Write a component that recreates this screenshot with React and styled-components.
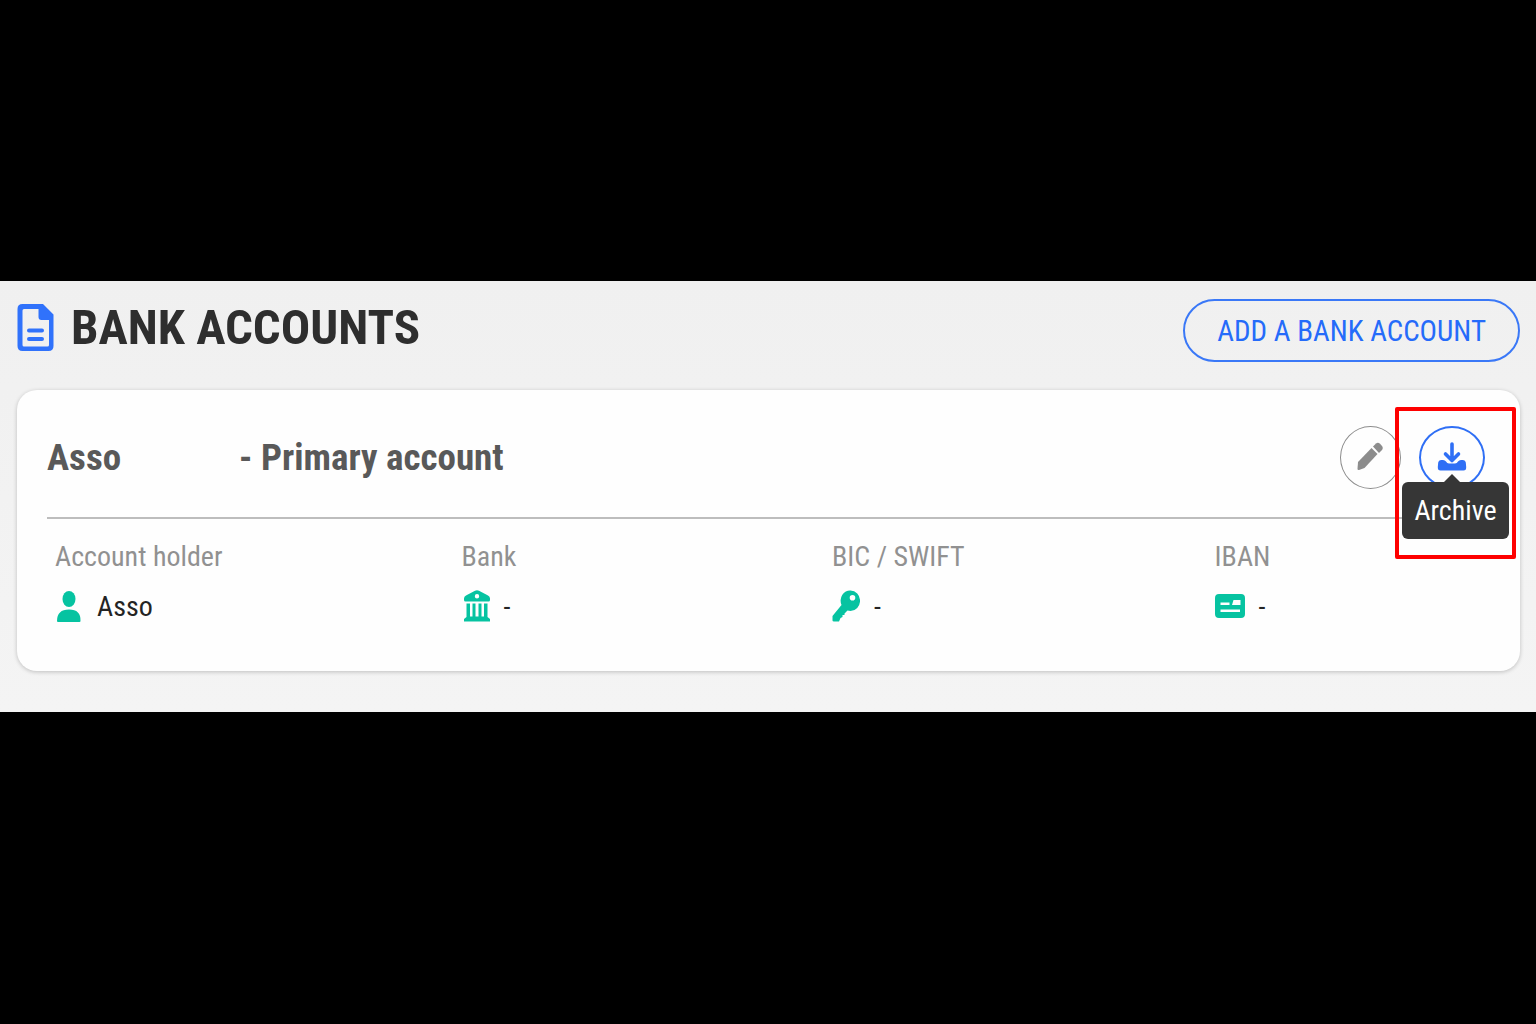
import React from "react";
import styled, { createGlobalStyle } from "styled-components";

const GlobalStyle = createGlobalStyle`
  *, *::before, *::after { box-sizing: border-box; }
  body {
    margin: 0;
    background: #000;
    font-family: "Roboto Condensed", Roboto, "Liberation Sans", sans-serif;
  }
  h1, h2, dl, dt, dd { margin: 0; font-weight: inherit; }
  svg { display: block; flex: none; }
`;

const Stage = styled.div`
  min-height: 100vh;
  display: flex;
  flex-direction: column;
  justify-content: center;
  padding-bottom: 31px;
`;

const Panel = styled.main`
  display: flex;
  flex-direction: column;
  gap: 28px;
  padding: 18px 16px 41px 17px;
  background: linear-gradient(#f0f0f0, #f4f4f4);
`;

const PanelHeader = styled.header`
  display: flex;
  align-items: flex-start;
  justify-content: space-between;
`;

const Title = styled.h1`
  display: flex;
  align-items: center;
  gap: 16px;
  height: 58px;
  color: #2e2e2e;
  font-size: 49px;
  line-height: 58px;
  font-weight: 700;
`;

const AddButton = styled.button`
  height: 63px;
  padding: 0 32px;
  border: 2px solid #3a78f7;
  border-radius: 32px;
  background: transparent;
  color: #256bfa;
  font-family: inherit;
  font-size: 29px;
  line-height: 36px;
  cursor: pointer;
`;

const Card = styled.section`
  padding: 36px 31px 46px 30px;
  border-radius: 20px;
  background: #fefefe;
  box-shadow: 0 1px 4px rgba(0, 0, 0, 0.22);
`;

const CardHeader = styled.div`
  display: flex;
  align-items: center;
  justify-content: space-between;
  padding: 0 4px 28px 0;
  border-bottom: 2px solid #bdbdbd;
`;

const AccountName = styled.h2`
  display: flex;
  gap: 118px;
  color: #595959;
  font-size: 37px;
  line-height: 44px;
  font-weight: 700;
`;

const Actions = styled.div`
  display: flex;
  gap: 18px;
`;

const RoundButton = styled.button`
  display: flex;
  align-items: center;
  justify-content: center;
  width: ${(p) => p.$width}px;
  height: 63px;
  padding: 0 0 2px;
  border: ${(p) => (p.$primary ? 2 : 1)}px solid currentColor;
  border-radius: 50%;
  background: transparent;
  color: ${(p) => (p.$primary ? "#2f6ff5" : "#8c8c8c")};
  cursor: pointer;
`;

const ArchiveAction = styled.div`
  position: relative;
`;

const Highlight = styled.div`
  position: absolute;
  top: -19px;
  left: -24px;
  right: -31px;
  height: 152px;
  border: 4px solid #fe0000;
  border-radius: 2px;
  pointer-events: none;
`;

const Tooltip = styled.div`
  position: absolute;
  top: 56px;
  left: -17px;
  width: 107px;
  border-radius: 6px;
  background: #363636;
  color: #fff;
  font-size: 28px;
  line-height: 57px;
  text-align: center;

  &::before {
    content: "";
    position: absolute;
    left: 42px;
    bottom: 100%;
    border: 8px solid transparent;
    border-top-width: 0;
    border-bottom-color: #363636;
  }
`;

const Details = styled.dl`
  display: grid;
  grid-template-columns: 406fr 370fr 382fr 274fr;
  padding: 20px 0 0 8px;
`;

const Detail = styled.div`
  display: flex;
  flex-direction: column;
  gap: 14px;
`;

const Label = styled.dt`
  color: #919191;
  font-size: 28px;
  line-height: 36px;
`;

const Value = styled.dd`
  display: flex;
  align-items: center;
  gap: 14px;
  height: 36px;
  color: #242424;
  font-size: 28px;
  line-height: 36px;
`;

const DocumentIcon = () => (
  <svg width="38" height="48" viewBox="0 0 38 48" aria-hidden="true">
    <path
      fillRule="evenodd"
      fill="#3072fb"
      d="M6 0H26L36.500 10.500V42Q36.500 47 31.500 47H5.500Q.5 47 .5 42V5Q.5 0 5.500 0ZM7 5Q5.500 5 5.500 6.500V41Q5.500 42.500 7 42.500H30.500Q32 42.500 32 41V16H24.500Q21.500 16 21.500 13V5Z"
    />
    <path d="M12 26.500H25M12 35H25" stroke="#3072fb" strokeWidth="4" strokeLinecap="round" />
  </svg>
);

const PencilIcon = () => (
  <svg width="28" height="30" viewBox="0 0 28 30" fill="currentColor" aria-hidden="true">
    <path d="M1 20L14.500 6L20.500 12L7.500 26L2 28Q.5 28.300 .5 27Z" />
    <path d="M16 4.500L19 1.500Q21 -.2 23 1.800L25 4Q26.500 6 25 8L22 11Z" />
  </svg>
);

const ArchiveIcon = () => (
  <svg width="30" height="30" viewBox="0 0 30 30" aria-hidden="true">
    <path d="M15 2V17M8.500 12L15 18.500L21.500 12" fill="none" stroke="currentColor" strokeWidth="3.600" strokeLinecap="round" strokeLinejoin="round" />
    <path fill="currentColor" d="M4 18H6Q8 18 9 19.500Q10 21.500 12 21.500H18Q20 21.500 21 19.500Q22 18 24 18H26Q28.500 18 28.800 20.500L29.200 25Q29.400 28.500 26.500 28.500H3.500Q.6 28.500 .8 25L1.200 20.500Q1.500 18 4 18Z" />
  </svg>
);

const iconProps = { width: 28, height: 34, viewBox: "0 0 28 34", fill: "#06c3a1", "aria-hidden": true };

const PersonIcon = () => (
  <svg {...iconProps}>
    <ellipse cx="14" cy="9" rx="6.500" ry="8" />
    <path d="M2 31Q2 19.500 14 19.500T25.500 31Q25.500 32 24.500 32H3Q2 32 2 31Z" />
  </svg>
);

const BankIcon = () => (
  <svg {...iconProps}>
    <path
      fillRule="evenodd"
      d="M13 .8Q15 -.4 17 .8L26 5.500Q28 6.500 28 8.500V10Q28 11.500 26.500 11.500H3.500Q2 11.500 2 10V8.500Q2 6.500 4 5.500ZM15 4A2.200 2.200 0 1 0 15 8.400A2.200 2.200 0 1 0 15 4Z"
    />
    <path d="M4.500 13.500H8V26.500H10.500V13.500H13.500V26.500H16.500V13.500H19.500V26.500H22V13.500H25.500V27L28 29V31.500H2V29L4.500 27Z" />
  </svg>
);

const KeyIcon = () => (
  <svg {...iconProps}>
    <path
      fillRule="evenodd"
      d="M18.500 .5A9.500 10.200 0 0 1 18.500 21L15.500 20.500L12.500 23.500V25H10.500V27L8.500 28L7 31.500H2Q.5 31.500 .5 30.500V26L9.500 15A9.500 10.200 0 0 1 18.500 .5ZM20.500 5A2.800 2.800 0 1 0 20.500 10.600A2.800 2.800 0 1 0 20.500 5Z"
    />
  </svg>
);

const CheckIcon = () => (
  <svg {...iconProps} width={30} viewBox="0 0 30 34">
    <path
      fillRule="evenodd"
      d="M4 4H26Q30 4 30 8V24Q30 28 26 28H4Q0 28 0 24V8Q0 4 4 4ZM5.500 12.500V15H14.500V12.500ZM18.500 10L17 15H25.500V10ZM5.500 19.500V22H25V19.500Z"
    />
  </svg>
);

const details = [
  { label: "Account holder", value: "Asso", Icon: PersonIcon },
  { label: "Bank", value: "-", Icon: BankIcon },
  { label: "BIC / SWIFT", value: "-", Icon: KeyIcon },
  { label: "IBAN", value: "-", Icon: CheckIcon },
];

export default function App() {
  return (
    <Stage>
      <GlobalStyle />
      <Panel>
        <PanelHeader>
          <Title>
            <DocumentIcon />
            BANK ACCOUNTS
          </Title>
          <AddButton type="button">ADD A BANK ACCOUNT</AddButton>
        </PanelHeader>
        <Card>
          <CardHeader>
            <AccountName>
              <span>Asso</span>
              <span>- Primary account</span>
            </AccountName>
            <Actions>
              <RoundButton type="button" $width={61} aria-label="Edit">
                <PencilIcon />
              </RoundButton>
              <ArchiveAction>
                <RoundButton type="button" $width={66} $primary aria-label="Archive" aria-describedby="archive-tip">
                  <ArchiveIcon />
                </RoundButton>
                <Highlight />
                <Tooltip role="tooltip" id="archive-tip">Archive</Tooltip>
              </ArchiveAction>
            </Actions>
          </CardHeader>
          <Details>
            {details.map(({ label, value, Icon }) => (
              <Detail key={label}>
                <Label>{label}</Label>
                <Value>
                  <Icon />
                  {value}
                </Value>
              </Detail>
            ))}
          </Details>
        </Card>
      </Panel>
    </Stage>
  );
}
